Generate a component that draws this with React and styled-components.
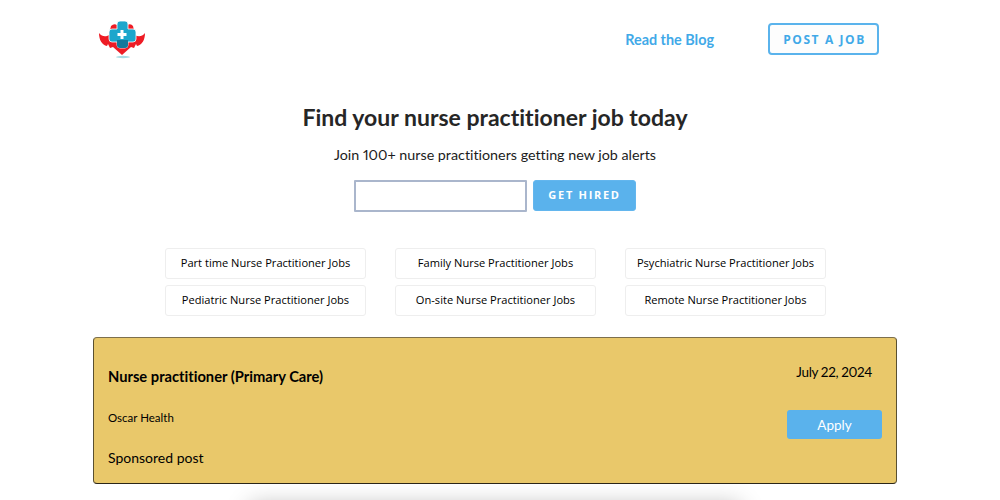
import React from 'react';
import styled, { createGlobalStyle } from 'styled-components';

const jobLinks = [
  'Part time Nurse Practitioner Jobs',
  'Family Nurse Practitioner Jobs',
  'Psychiatric Nurse Practitioner Jobs',
  'Pediatric Nurse Practitioner Jobs',
  'On-site Nurse Practitioner Jobs',
  'Remote Nurse Practitioner Jobs',
];

const Logo = () => (
  <svg width="50" height="44" viewBox="0 0 50 44" aria-hidden="true">
    <path
      d="M1 15 C4 19 8 19 11 17 L13 8 Q16 5 19 7 L29 7 Q33 5 35 8 L37 17 C40 19 44 19 47 15 C47 22 44 27 39 28 L38 26 L36 30 L33 29 C30 32 27 34 24 37 C21 34 18 32 15 29 L12 30 L10 26 L9 28 C4 27 1 22 1 15 Z"
      fill="#ee1c25"
    />
    <path
      d="M19 6 Q19 3 22 3 L27 3 Q30 3 30 6 L30 11 L35 11 Q38 11 38 14 L38 21 Q38 24 35 24 L30 24 L30 27 Q30 30 27 30 L22 30 Q19 30 19 27 L19 24 L14 24 Q11 24 11 21 L11 14 Q11 11 14 11 L19 11 Z"
      fill="#1ca6cc"
      stroke="#ffffff"
      strokeWidth="0.8"
    />
    <path d="M19 22 L30 22 L30 27 Q30 30 27 30 L22 30 Q19 30 19 27 Z" fill="#14799b" />
    <path d="M22.5 12 H25.5 V15 H28.5 V18 H25.5 V21 H22.5 V18 H19.5 V15 H22.5 Z" fill="#ffffff" />
    <ellipse cx="25" cy="39" rx="7" ry="1.2" fill="#a9dbe4" />
  </svg>
);

const App = () => (
  <Page>
    <GlobalStyle />
    <Header>
      <LogoLink>
        <Logo />
      </LogoLink>
      <Nav>
        <BlogLink>Read the Blog</BlogLink>
        <PostButton>POST A JOB</PostButton>
      </Nav>
    </Header>

    <Hero>
      <Title>Find your nurse practitioner job today</Title>
      <Subtitle>Join 100+ nurse practitioners getting new job alerts</Subtitle>
      <SignupForm>
        <EmailInput />
        <HireButton type="button">GET HIRED</HireButton>
      </SignupForm>
    </Hero>

    <LinkGrid>
      {jobLinks.map((label) => (
        <JobLink key={label}>{label}</JobLink>
      ))}
    </LinkGrid>

    <JobCard>
      <JobInfo>
        <JobTitle>Nurse practitioner (Primary Care)</JobTitle>
        <Company>Oscar Health</Company>
        <Sponsored>Sponsored post</Sponsored>
      </JobInfo>
      <JobSide>
        <JobDate>July 22, 2024</JobDate>
        <ApplyButton type="button">Apply</ApplyButton>
      </JobSide>
    </JobCard>

    <NextCard />
  </Page>
);

export default App;

const GlobalStyle = createGlobalStyle`
  html, body {
    margin: 0;
    height: 500px;
    overflow: hidden;
    background: #ffffff;
  }
`;

const Page = styled.div`
  width: 1000px;
  height: 500px;
  overflow: hidden;
  font-family: Lato, sans-serif;
  font-variant-ligatures: none;
  font-variant-numeric: proportional-nums;
  color: #000;
`;

const Header = styled.header`
  display: flex;
  justify-content: space-between;
  align-items: flex-start;
  height: 84px;
  padding: 18px 121px 0 98px;
`;

const LogoLink = styled.a`
  display: block;
  height: 44px;
`;

const Nav = styled.nav`
  display: flex;
  align-items: center;
  gap: 54px;
  padding-top: 5px;
`;

const BlogLink = styled.a`
  font-size: 14.4px;
  font-weight: 700;
  color: #41a9e8;
`;

const PostButton = styled.a`
  display: flex;
  align-items: center;
  justify-content: center;
  box-sizing: border-box;
  width: 111px;
  height: 32px;
  padding-left: 2px;
  border: 2px solid #5ab3ec;
  border-radius: 4px;
  background: #fdfdfd;
  font-family: 'Open Sans', sans-serif;
  font-size: 12px;
  font-weight: 700;
  letter-spacing: 1.6px;
  color: #41a9e8;
`;

const Hero = styled.section`
  display: flex;
  flex-direction: column;
  align-items: center;
  padding-right: 10px;
`;

const Title = styled.h1`
  margin: 0;
  font-size: 23px;
  line-height: 30px;
  font-weight: 700;
  color: #262626;
`;

const Subtitle = styled.p`
  margin: 13px 0 0;
  font-size: 14.3px;
  line-height: 20px;
  color: #1c1c1c;
`;

const SignupForm = styled.form`
  display: flex;
  gap: 6px;
  margin-top: 15px;
`;

const EmailInput = styled.input`
  box-sizing: border-box;
  width: 173px;
  height: 32px;
  border: 2px solid #aab6cc;
  border-radius: 1px;
  background: #fff;
`;

const HireButton = styled.button`
  width: 103px;
  height: 31px;
  padding: 0 0 2px;
  border: 1px solid #63b6ee;
  border-radius: 3px;
  background: #5ab2ec;
  font-family: 'Open Sans', sans-serif;
  font-size: 11px;
  font-weight: 700;
  letter-spacing: 1.7px;
  color: #fff;
`;

const LinkGrid = styled.div`
  display: grid;
  grid-template-columns: repeat(3, 201px);
  justify-content: center;
  column-gap: 29px;
  row-gap: 6px;
  margin-top: 36px;
  padding-right: 9px;
`;

const JobLink = styled.a`
  display: flex;
  align-items: center;
  justify-content: center;
  box-sizing: border-box;
  height: 31px;
  padding-bottom: 2px;
  border: 1px solid #eeeeee;
  border-radius: 3px;
  background: #fff;
  font-family: 'Open Sans', sans-serif;
  font-size: 11.1px;
  color: #000;
`;

const JobCard = styled.article`
  display: flex;
  justify-content: space-between;
  box-sizing: border-box;
  width: 804px;
  height: 147px;
  margin: 21px 0 0 93px;
  padding: 0 14px;
  border: 1px solid #5a5030;
  border-top-color: #7d6f4c;
  border-bottom-color: #2b2618;
  border-radius: 4px;
  background: #e9c86a;
`;

const JobInfo = styled.div`
  display: flex;
  flex-direction: column;
`;

const JobTitle = styled.h2`
  margin: 28px 0 0;
  font-size: 14.7px;
  line-height: 20px;
  font-weight: 700;
`;

const Company = styled.div`
  margin-top: 24px;
  font-size: 11.5px;
  line-height: 16px;
`;

const Sponsored = styled.div`
  margin-top: 23px;
  font-size: 14px;
  line-height: 18px;
`;

const JobSide = styled.div`
  display: flex;
  flex-direction: column;
  align-items: flex-end;
`;

const JobDate = styled.div`
  margin: 25px 10px 0 0;
  font-size: 13.5px;
  line-height: 18px;
  letter-spacing: -0.35px;
`;

const ApplyButton = styled.button`
  width: 95px;
  height: 29px;
  margin-top: 29px;
  padding: 0;
  border: none;
  border-radius: 3px;
  background: #5ab2ec;
  font-family: Lato, sans-serif;
  font-size: 13.5px;
  color: #fff;
`;

const NextCard = styled.div`
  width: 490px;
  height: 60px;
  margin: 22px 0 0 250px;
  background: #fff;
  box-shadow: 0 0 24px rgba(0, 0, 0, 0.3);
`;
